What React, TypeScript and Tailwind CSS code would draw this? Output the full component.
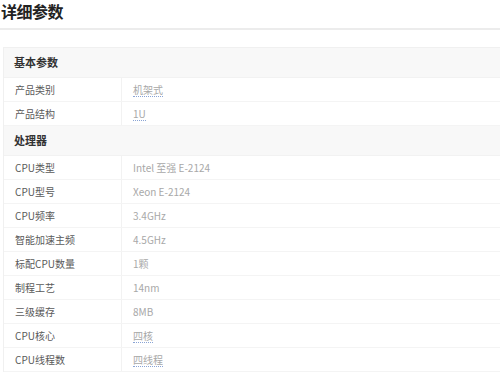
import React from 'react';

interface SpecRow {
  label: string;
  value: string;
  link?: boolean;
}

interface SpecGroup {
  title: string;
  rows: SpecRow[];
}

const groups: SpecGroup[] = [
  {
    title: '基本参数',
    rows: [
      { label: '产品类别', value: '机架式', link: true },
      { label: '产品结构', value: '1U', link: true },
    ],
  },
  {
    title: '处理器',
    rows: [
      { label: 'CPU类型', value: 'Intel 至强 E-2124' },
      { label: 'CPU型号', value: 'Xeon E-2124' },
      { label: 'CPU频率', value: '3.4GHz' },
      { label: '智能加速主频', value: '4.5GHz' },
      { label: '标配CPU数量', value: '1颗' },
      { label: '制程工艺', value: '14nm' },
      { label: '三级缓存', value: '8MB' },
      { label: 'CPU核心', value: '四核', link: true },
      { label: 'CPU线程数', value: '四线程', link: true },
    ],
  },
];

const font = { fontFamily: '"Noto Sans CJK SC", "Liberation Sans", sans-serif' };

const App: React.FC = () => {
  return (
    <div className="w-[500px] h-[377px] overflow-hidden bg-white" style={font}>
      {/* Title */}
      <div className="h-[28px] pt-[1px] pl-[1px]">
        <h2 className="text-[16px] leading-[20px] font-bold text-[#222] tracking-[-0.5px]">详细参数</h2>
      </div>
      <div className="h-[2px] bg-[#ececec]" />

      {/* Spec table */}
      <div className="mt-[17px] ml-[3px] border-l border-t border-[#f0f0f0]">
        {groups.map((group) => (
          <div key={group.title}>
            <div className="h-[30px] flex items-center pl-[10px] bg-[#f8f8f8] border-b border-[#f2f2f2]">
              <span className="text-[11px] font-bold text-[#333]">{group.title}</span>
            </div>
            {group.rows.map((row) => (
              <div key={row.label} className="h-[24px] flex border-b border-[#f4f4f4]">
                <div className="w-[118px] flex items-center pl-[11px] border-r border-[#f2f2f2]">
                  <span className="text-[10px] text-[#5a5a5a]">{row.label}</span>
                </div>
                <div className="flex-1 flex items-center pl-[11px]">
                  <span
                    className={
                      row.link
                        ? 'text-[10px] text-[#a8a8a8] leading-[13px] border-b border-dotted border-[#8aa4d4]'
                        : 'text-[10px] text-[#a8a8a8]'
                    }
                  >
                    {row.value}
                  </span>
                </div>
              </div>
            ))}
          </div>
        ))}
      </div>
    </div>
  );
};

export default App;
